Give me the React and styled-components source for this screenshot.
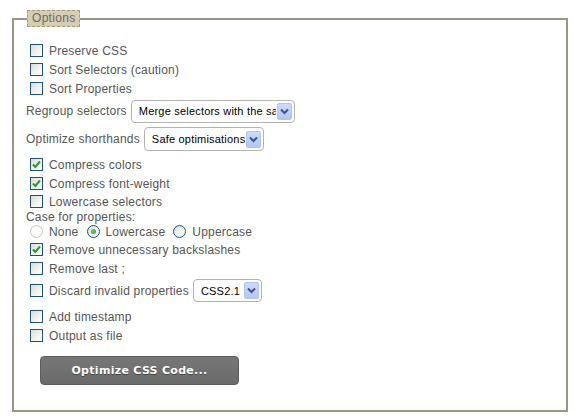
import React from 'react'
import styled, { createGlobalStyle } from 'styled-components'

const GlobalStyle = createGlobalStyle`
    html, body {
        margin: 0;
        padding: 0;
        background: #fff;
    }
    body {
        font-family: "Liberation Sans", Arial, sans-serif;
        font-size: 12px;
        letter-spacing: 0.2px;
        color: #555;
    }
`

const Page = styled.div`
    width: 574px;
    height: 417px;
    padding: 10px 0 0 12px;
    box-sizing: border-box;
`

const Fieldset = styled.fieldset`
    margin: 0;
    width: 556px;
    height: 402px;
    box-sizing: border-box;
    border: 2px solid #9b9583;
    padding: 14px 12px 0 12px;
`

const Legend = styled.legend`
    padding: 0 4px;
    margin: 0 0 0 1px;
    height: 17px;
    box-sizing: border-box;
    line-height: 15px;
    background: #d5ceb1;
    border: 1px dashed #a19b82;
    color: #6a6a6a;
    font-size: 12px;
    letter-spacing: 0.3px;
`

const Row = styled.div`
    display: flex;
    align-items: center;
    height: ${p => p.$h || 19}px;
    margin-top: ${p => p.$mt || 0}px;
    white-space: nowrap;
`

const Indent = styled.div`
    display: flex;
    align-items: center;
    padding-left: 4px;
`

const Box = styled.span`
    width: 13px;
    height: 13px;
    box-sizing: border-box;
    border: 1px solid #1c5180;
    background: linear-gradient(135deg, #dcdcd7 0%, #f4f4f0 60%, #ffffff 100%);
    margin-right: 6px;
    display: flex;
    align-items: center;
    justify-content: center;
    flex-shrink: 0;
`

const Round = styled.span`
    width: 13px;
    height: 13px;
    box-sizing: border-box;
    border-radius: 50%;
    border: 1px solid ${p => (p.$disabled ? '#cac8bb' : '#1c5180')};
    background: ${p => (p.$disabled ? '#fcfcfb' : 'linear-gradient(135deg, #dcdcd7 0%, #f4f4f0 60%, #ffffff 100%)')};
    margin-right: 6px;
    display: flex;
    align-items: center;
    justify-content: center;
    flex-shrink: 0;
`

const Dot = styled.span`
    width: 5px;
    height: 5px;
    border-radius: 50%;
    background: radial-gradient(circle at 40% 40%, #5ed35e, #21a121);
`

const RadioOption = styled.span`
    display: flex;
    align-items: center;
    margin-right: 8px;
`

const Label = styled.span`
    margin-right: 4px;
`

const Dropdown = styled.div`
    display: flex;
    align-items: center;
    width: ${p => p.$w}px;
    height: ${p => p.$h || 23}px;
    box-sizing: border-box;
    border: 1px solid #b3b3b3;
    border-radius: 4px;
    background: #fff;
    padding: 0 2px 0 7px;
    flex-shrink: 0;
`

const DropText = styled.span`
    flex: 1;
    overflow: hidden;
    color: #000;
    font-size: 11px;
    letter-spacing: 0.2px;
    white-space: nowrap;
`

const DropArrow = styled.span`
    width: 15px;
    height: 17px;
    box-sizing: border-box;
    margin-left: 1px;
    border: 1px solid #b0c4f4;
    border-radius: 2px;
    background: linear-gradient(180deg, #cddafc 0%, #b2c6f6 100%);
    display: flex;
    align-items: center;
    justify-content: center;
    flex-shrink: 0;
`

const ButtonRow = styled.div`
    display: flex;
    margin-top: 11px;
    padding-left: 14px;
`

const SubmitButton = styled.button`
    width: 199px;
    height: 29px;
    border: 1px solid #5c5c5c;
    border-radius: 4px;
    background: linear-gradient(180deg, #777 0%, #6a6a6a 100%);
    color: #fff;
    font-family: "DejaVu Sans", Verdana, sans-serif;
    font-weight: bold;
    font-size: 11px;
    letter-spacing: 0.3px;
    text-shadow: 0 1px 0 #444;
    padding: 0;
`

const Check = () => (
    <svg width="11" height="11" viewBox="0 0 11 11">
        <path d="M2 5.5 L4.3 8 L9 2.5" fill="none" stroke="#21a121" strokeWidth="2" />
    </svg>
)

const Chevron = () => (
    <svg width="9" height="7" viewBox="0 0 9 7">
        <path d="M1 1.5 L4.5 5 L8 1.5" fill="none" stroke="#3f5583" strokeWidth="2" />
    </svg>
)

const Checkbox = ({ checked, children, h, mt, after }) => (
    <Row $h={h} $mt={mt}>
        <Indent>
            <Box>{checked && <Check />}</Box>
            <Label>{children}</Label>
            {after}
        </Indent>
    </Row>
)

const Select = ({ w, h, text }) => (
    <Dropdown $w={w} $h={h}>
        <DropText>{text}</DropText>
        <DropArrow><Chevron /></DropArrow>
    </Dropdown>
)

const App = () => {
    return (
        <Page>
            <GlobalStyle />
            <Fieldset>
                <Legend>Options</Legend>
                <Checkbox>Preserve CSS</Checkbox>
                <Checkbox>Sort Selectors (caution)</Checkbox>
                <Checkbox>Sort Properties</Checkbox>
                <Row $h={26}>
                    <Label>Regroup selectors</Label>
                    <Select w={164} text="Merge selectors with the same properties" />
                </Row>
                <Row $h={30}>
                    <Label>Optimize shorthands</Label>
                    <Select w={120} h={24} text="Safe optimisations" />
                </Row>
                <Checkbox mt={1} checked>Compress colors</Checkbox>
                <Checkbox checked>Compress font-weight</Checkbox>
                <Checkbox h={17}>Lowercase selectors</Checkbox>
                <Row $h={13}>Case for properties:</Row>
                <Row $h={17}>
                    <Indent>
                        <RadioOption><Round $disabled />None</RadioOption>
                        <RadioOption><Round><Dot /></Round>Lowercase</RadioOption>
                        <RadioOption><Round />Uppercase</RadioOption>
                    </Indent>
                </Row>
                <Checkbox checked>Remove unnecessary backslashes</Checkbox>
                <Checkbox>Remove last ;</Checkbox>
                <Checkbox h={25} after={<Select w={69} text="CSS2.1" />}>Discard invalid properties</Checkbox>
                <Checkbox mt={4}>Add timestamp</Checkbox>
                <Checkbox>Output as file</Checkbox>
                <ButtonRow>
                    <SubmitButton>Optimize CSS Code...</SubmitButton>
                </ButtonRow>
            </Fieldset>
        </Page>
    )
}

export default App
